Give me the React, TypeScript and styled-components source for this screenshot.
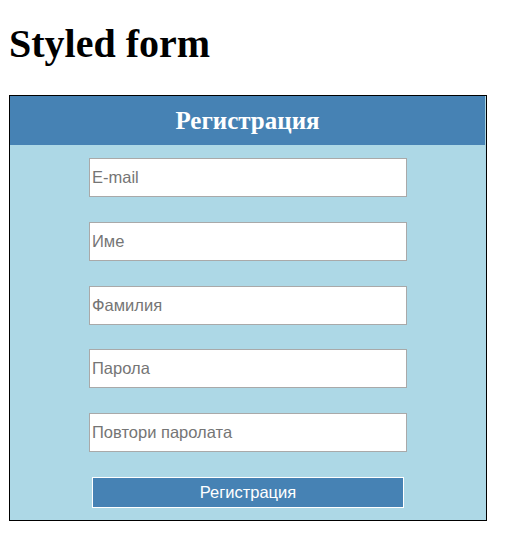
import React from "react";
import styled, { createGlobalStyle } from "styled-components";

const GlobalStyle = createGlobalStyle`
  body {
    margin: 0;
    padding: 0 8px;
    background: #fff;
    font-family: "Liberation Serif", "Times New Roman", serif;
  }
`;

const Title = styled.h1`
  margin: 22px 0 29px 1px;
  font-size: 40px;
  font-weight: bold;
  line-height: 44px;
  color: #000;
`;

const Form = styled.form`
  width: 476px;
  margin-left: 1px;
  border: 1px solid #000;
  background: #add8e6;
  display: flex;
  flex-direction: column;
`;

const Header = styled.h2`
  width: 475px;
  height: 49px;
  margin: 0;
  background: #4682b4;
  color: #fff;
  font-size: 25px;
  font-weight: bold;
  display: flex;
  align-items: center;
  justify-content: center;
`;

const Fields = styled.div`
  display: flex;
  flex-direction: column;
  align-items: center;
  gap: 24.75px;
  padding: 13px 0 12px;
`;

const Input = styled.input`
  box-sizing: border-box;
  width: 318px;
  height: 39px;
  padding: 0 2px;
  border: 1px solid #a9a9a9;
  background: #fff;
  font-family: "Liberation Sans", Arial, sans-serif;
  font-size: 16.5px;
  outline: none;

  &::placeholder {
    color: #757575;
  }
`;

const Submit = styled.button`
  box-sizing: border-box;
  width: 312px;
  height: 31px;
  border: 1px solid #fff;
  background: #4682b4;
  color: #fff;
  font-family: "Liberation Sans", Arial, sans-serif;
  font-size: 16.5px;
  cursor: pointer;
`;

const fields = [
  { type: "email", placeholder: "E-mail" },
  { type: "text", placeholder: "Име" },
  { type: "text", placeholder: "Фамилия" },
  { type: "password", placeholder: "Парола" },
  { type: "password", placeholder: "Повтори паролата" },
];

const App = () => {
  return (
    <>
      <GlobalStyle />
      <Title>Styled form</Title>
      <Form onSubmit={(e) => e.preventDefault()}>
        <Header>Регистрация</Header>
        <Fields>
          {fields.map((f, key) => (
            <Input key={key} type={f.type} placeholder={f.placeholder} />
          ))}
          <Submit type="submit">Регистрация</Submit>
        </Fields>
      </Form>
    </>
  );
};

export default App;
